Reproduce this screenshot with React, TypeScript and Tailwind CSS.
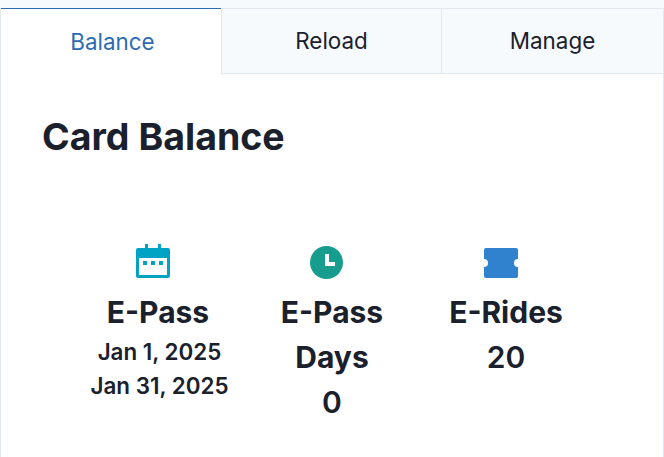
const Calendar = () => (
  <svg width="34" height="34" viewBox="0 0 34 34" className="block">
    <rect x="9" y="0" width="3" height="5" fill="#00a3c4" />
    <rect x="22" y="0" width="3" height="5" fill="#00a3c4" />
    <rect x="0" y="4" width="34" height="30" rx="2" fill="#00a3c4" />
    <rect x="3" y="14" width="28" height="17" fill="#fff" />
    <rect x="7" y="17" width="4" height="4" fill="#00a3c4" />
    <rect x="15" y="17" width="4" height="4" fill="#00a3c4" />
    <rect x="23" y="17" width="4" height="4" fill="#00a3c4" />
  </svg>
);

const Clock = () => (
  <svg width="34" height="35" viewBox="0 0 34 35" className="block">
    <circle cx="16.5" cy="18.5" r="16.5" fill="#179d8d" />
    <path d="M15 10h4v8h6v4H15z" fill="#fff" />
  </svg>
);

const Ticket = () => (
  <svg width="34" height="34" viewBox="0 0 34 34" className="block">
    <path
      d="M2 4h30a2 2 0 0 1 2 2v9a4 4 0 0 0 0 8v9a2 2 0 0 1-2 2H2a2 2 0 0 1-2-2v-9a4 4 0 0 0 0-8V6a2 2 0 0 1 2-2z"
      fill="#3182ce"
    />
  </svg>
);

const Stat = ({ icon, title, children }: { icon: React.ReactNode; title: React.ReactNode; children: React.ReactNode }) => (
  <div className="flex w-[174px] flex-col items-center text-center">
    <div className="h-[34px] w-[44px]">{icon}</div>
    <h3 className="mt-[12px] text-[30px] leading-[45px] font-bold">{title}</h3>
    {children}
  </div>
);

export default function App() {
  return (
    <div className="h-[457px] w-[664px] overflow-hidden bg-[#f7fafc] pt-2 font-['Inter',sans-serif] text-[#1a202c]">
      <div className="h-full border-x border-[#e2e8f0] bg-white">
        <div className="flex h-[66px] text-[22.4px]">
          <div className="flex h-full w-[220px] items-center justify-center border-t border-[#2b6cb0] bg-white pl-[3px] text-[#2b6cb0]">
            Balance
          </div>
          <div className="flex h-full w-[221px] items-center justify-center border-x border-y border-[#e2e8f0] bg-[#f7fafc]">
            Reload
          </div>
          <div className="flex h-full flex-1 items-center justify-center border-y border-[#e2e8f0] bg-[#f7fafc]">
            Manage
          </div>
        </div>
        <div className="px-[41px] pt-[39px]">
          <h2 className="text-[37.5px] leading-[48px] font-bold">Card Balance</h2>
          <div className="mt-[83px] flex justify-center">
            <Stat icon={<Calendar />} title="E-Pass">
              <div className="pl-[3px]">
                <p className="text-[22.4px] leading-[34px] font-semibold">Jan 1, 2025</p>
                <p className="text-[22.4px] leading-[34px] font-semibold">Jan 31, 2025</p>
              </div>
            </Stat>
            <Stat icon={<Clock />} title={<>E-Pass<br />Days</>}>
              <p className="text-[30px] leading-[45px] font-semibold">0</p>
            </Stat>
            <Stat icon={<Ticket />} title="E-Rides">
              <p className="text-[30px] leading-[45px] font-semibold">20</p>
            </Stat>
          </div>
        </div>
      </div>
    </div>
  );
}
